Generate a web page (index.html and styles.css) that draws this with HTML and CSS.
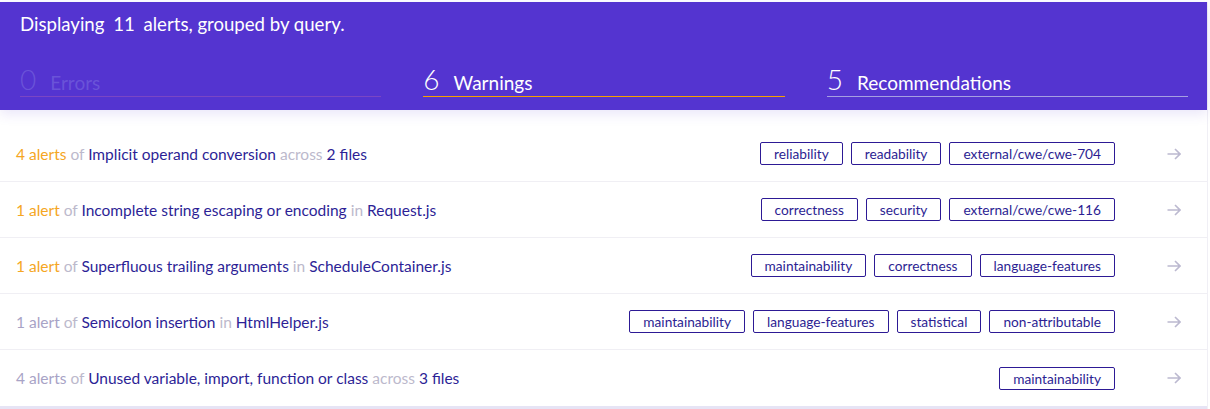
FILE: index.html
```html
<!DOCTYPE html>
<html lang="en">
<head>
<meta charset="utf-8">
<title>Alerts</title>
<link rel="stylesheet" href="styles.css">
</head>
<body>
<div class="page">
  <header class="summary">
    <div class="summary-title">Displaying <span class="total">11</span> alerts, grouped by query.</div>
    <div class="counters">
      <div class="counter counter-errors"><span class="count">0</span><span class="label">Errors</span></div>
      <div class="counter counter-warnings"><span class="count">6</span><span class="label">Warnings</span></div>
      <div class="counter counter-recs"><span class="count">5</span><span class="label">Recommendations</span></div>
    </div>
  </header>
  <ul class="alerts">
    <li class="alert-row">
      <div class="alert-text"><span class="num warn">4 alerts</span> <span class="muted">of</span> <span class="query">Implicit operand conversion</span> <span class="muted">across</span> <span class="query">2 files</span></div>
      <div class="tags"><span class="tag">reliability</span><span class="tag">readability</span><span class="tag">external/cwe/cwe-704</span></div>
      <svg class="arrow" width="14" height="12" viewBox="0 0 14 12"><path d="M0.5 6H13M8 1L13 6L8 11" fill="none" stroke="#bcb9d0" stroke-width="1.6"/></svg>
    </li>
    <li class="alert-row">
      <div class="alert-text"><span class="num warn">1 alert</span> <span class="muted">of</span> <span class="query">Incomplete string escaping or encoding</span> <span class="muted">in</span> <span class="query">Request.js</span></div>
      <div class="tags"><span class="tag">correctness</span><span class="tag">security</span><span class="tag">external/cwe/cwe-116</span></div>
      <svg class="arrow" width="14" height="12" viewBox="0 0 14 12"><path d="M0.5 6H13M8 1L13 6L8 11" fill="none" stroke="#bcb9d0" stroke-width="1.6"/></svg>
    </li>
    <li class="alert-row">
      <div class="alert-text"><span class="num warn">1 alert</span> <span class="muted">of</span> <span class="query">Superfluous trailing arguments</span> <span class="muted">in</span> <span class="query">ScheduleContainer.js</span></div>
      <div class="tags"><span class="tag">maintainability</span><span class="tag">correctness</span><span class="tag">language-features</span></div>
      <svg class="arrow" width="14" height="12" viewBox="0 0 14 12"><path d="M0.5 6H13M8 1L13 6L8 11" fill="none" stroke="#bcb9d0" stroke-width="1.6"/></svg>
    </li>
    <li class="alert-row">
      <div class="alert-text"><span class="num rec">1 alert</span> <span class="muted">of</span> <span class="query">Semicolon insertion</span> <span class="muted">in</span> <span class="query">HtmlHelper.js</span></div>
      <div class="tags"><span class="tag">maintainability</span><span class="tag">language-features</span><span class="tag">statistical</span><span class="tag">non-attributable</span></div>
      <svg class="arrow" width="14" height="12" viewBox="0 0 14 12"><path d="M0.5 6H13M8 1L13 6L8 11" fill="none" stroke="#bcb9d0" stroke-width="1.6"/></svg>
    </li>
    <li class="alert-row">
      <div class="alert-text"><span class="num rec">4 alerts</span> <span class="muted">of</span> <span class="query">Unused variable, import, function or class</span> <span class="muted">across</span> <span class="query">3 files</span></div>
      <div class="tags"><span class="tag">maintainability</span></div>
      <svg class="arrow" width="14" height="12" viewBox="0 0 14 12"><path d="M0.5 6H13M8 1L13 6L8 11" fill="none" stroke="#bcb9d0" stroke-width="1.6"/></svg>
    </li>
  </ul>
</div>
</body>
</html>
```
FILE: styles.css
```css
* { box-sizing: border-box; }
html, body { margin: 0; padding: 0; background: #ffffff; }
body {
  font-family: Lato, "Open Sans", sans-serif;
  padding-top: 2px;
}
.page {
  width: 1208px;
  border-right: 1px solid #f0eff5;
}
.summary {
  background: #5434d0;
  color: #ffffff;
  padding: 11px 19px 0 20px;
  height: 108px;
  box-shadow: 0 4px 12px rgba(84, 52, 208, 0.13);
  position: relative;
  z-index: 1;
}
.summary-title {
  font-size: 18.6px;
  line-height: 22px;
}
.total { margin: 0 4px; }
.counters {
  display: grid;
  grid-template-columns: 1fr 1fr 1fr;
  column-gap: 42px;
  margin-top: 28px;
}
.counter {
  display: flex;
  align-items: baseline;
  padding-bottom: 1px;
  border-bottom: 1px solid #a69fe2;
}
.counter .count {
  font-size: 28px;
  line-height: 32px;
  font-weight: 300;
  margin-right: 14px;
}
.counter .label {
  font-size: 19px;
  line-height: 1;
}
.counter-errors { color: #6a53d8; border-bottom-color: #7a46c4; }
.counter-warnings { border-bottom-color: #f5a000; }
.counter-recs { border-bottom-color: #a69fe2; }
.alerts {
  list-style: none;
  margin: 16px 0 0 0;
  padding: 0;
  border-bottom: 3px solid #e6e4f5;
}
.alert-row {
  display: flex;
  align-items: center;
  height: 56px;
  padding: 0 26px 0 16px;
  border-bottom: 1px solid #f0eff4;
}
.alert-row:last-child { border-bottom: none; }
.alert-text {
  flex: 1;
  font-size: 15.5px;
  color: #2d1f96;
  white-space: nowrap;
}
.num.warn { color: #f5a623; }
.num.rec { color: #a8a3c6; }
.muted { color: #bcb9cc; }
.query { color: #2d1f96; }
.tags {
  display: flex;
  gap: 8px;
}
.tag {
  display: inline-block;
  font-size: 13.7px;
  line-height: 21px;
  padding: 0 13px;
  border: 1px solid #2d1a95;
  border-radius: 2px;
  color: #2c1e92;
  white-space: nowrap;
}
.arrow {
  margin-left: 52px;
  flex: none;
}
```
